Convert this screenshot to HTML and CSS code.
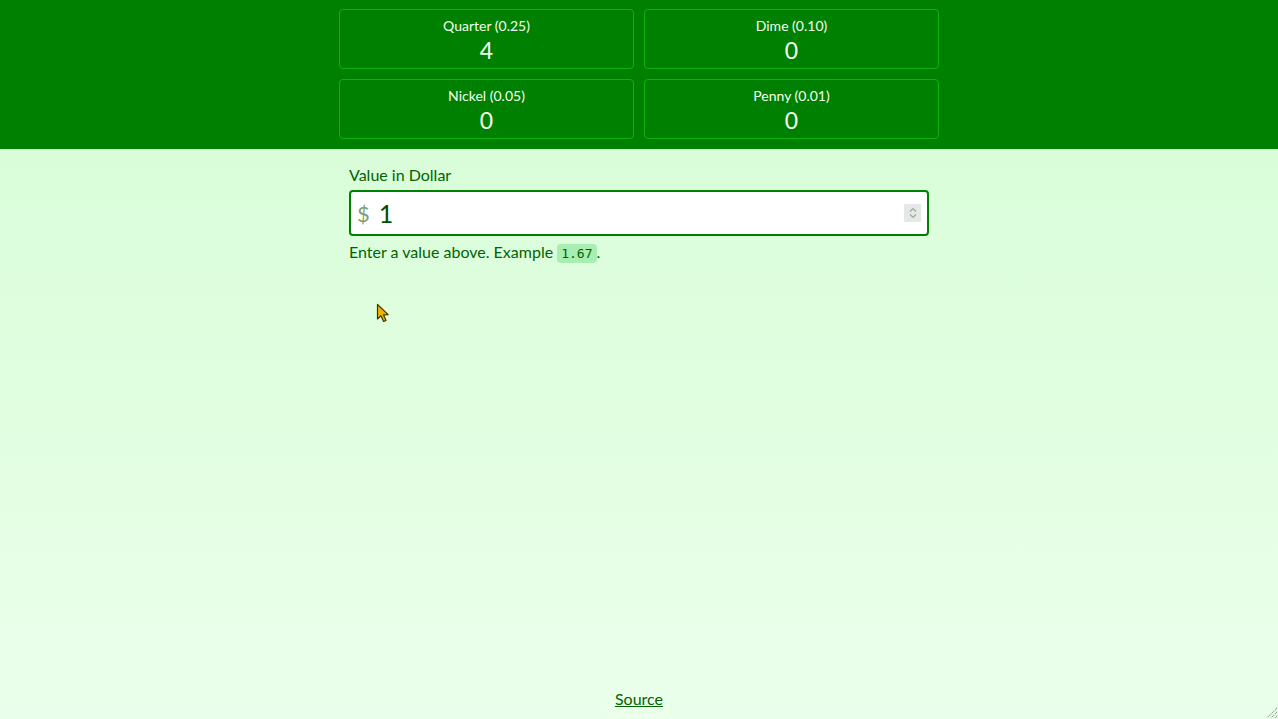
FILE: index.html
```html
<!DOCTYPE html>
<html lang="en">
<head>
<meta charset="utf-8">
<title>Coin Change</title>
<link rel="stylesheet" href="styles.css">
</head>
<body>
<div class="page">
  <header class="top">
    <div class="coins">
      <div class="coin"><div class="coin-label">Quarter (0.25)</div><div class="coin-count">4</div></div>
      <div class="coin"><div class="coin-label">Dime (0.10)</div><div class="coin-count">0</div></div>
      <div class="coin"><div class="coin-label">Nickel (0.05)</div><div class="coin-count">0</div></div>
      <div class="coin"><div class="coin-label">Penny (0.01)</div><div class="coin-count">0</div></div>
    </div>
  </header>
  <main class="main">
    <label class="field-label" for="amount">Value in Dollar</label>
    <div class="field">
      <span class="currency">$</span>
      <input class="amount" id="amount" type="text" value="1">
      <span class="spinner">
        <svg width="10" height="14" viewBox="0 0 10 14"><path d="M2 5.5 L5 2.5 L8 5.5" fill="none" stroke="#8fb08f" stroke-width="1.2"/><path d="M2 8.5 L5 11.5 L8 8.5" fill="none" stroke="#8fb08f" stroke-width="1.2"/></svg>
      </span>
    </div>
    <p class="help">Enter a value above. Example <code class="example">1.67</code>.</p>
  </main>
  <footer class="foot"><a class="source" href="#">Source</a></footer>
  <svg class="cursor" width="16" height="22" viewBox="0 0 16 22"><path d="M1.5 1.5 L1.5 16 L5 12.8 L7.6 18.5 L10 17.4 L7.5 11.8 L12.2 11.6 Z" fill="#f0b400" stroke="#3a3a00" stroke-width="1.2" stroke-linejoin="round"/></svg>
  <svg class="grip" width="14" height="14" viewBox="0 0 14 14"><path d="M13 3 L3 13 M13 7 L7 13 M13 11 L11 13" stroke="#7a9a7a" stroke-width="1.2" stroke-dasharray="1 1"/></svg>
</div>
</body>
</html>
```
FILE: styles.css
```css
* { box-sizing: border-box; }
html, body { margin: 0; padding: 0; }
body {
  font-family: "Segoe UI", Lato, "Noto Sans", sans-serif;
  color: #006400;
  background: linear-gradient(#d4fdd4, #ebffeb);
  min-height: 100vh;
}
.page {
  min-height: 100vh;
  display: flex;
  flex-direction: column;
  position: relative;
}
.top {
  background: #008000;
  padding: 9px 0 10px;
}
.coins {
  width: 600px;
  margin: 0 auto;
  display: grid;
  grid-template-columns: 1fr 1fr;
  gap: 10px;
}
.coin {
  height: 60px;
  border: 1px solid #10b010;
  border-radius: 4px;
  text-align: center;
  color: #f4fff0;
  padding-top: 6px;
}
.coin-label { font-size: 14px; line-height: 19px; }
.coin-count { font-size: 23px; line-height: 30px; }
.main {
  width: 600px;
  margin: 0 auto;
  padding: 15px 10px 0;
  flex: 1;
}
.field-label {
  display: block;
  font-size: 16px;
  line-height: 22px;
  margin-bottom: 4px;
}
.field {
  display: flex;
  align-items: center;
  height: 46px;
  background: #fff;
  border: 2px solid #008000;
  border-radius: 4px;
  padding: 0 6px 0 6px;
}
.currency {
  font-size: 22px;
  color: #7a9f7a;
  margin-right: 9px;
}
.amount {
  flex: 1;
  border: 0;
  outline: none;
  background: transparent;
  font-family: inherit;
  font-size: 25px;
  color: #004d00;
  padding: 0;
}
.spinner {
  width: 17px;
  height: 18px;
  background: #e6e8e8;
  display: flex;
  align-items: center;
  justify-content: center;
}
.help {
  margin: 5px 0 0;
  font-size: 16px;
  line-height: 22px;
}
.example {
  font-family: "DejaVu Sans Mono", monospace;
  font-size: 13px;
  background: #a8eeb0;
  border-radius: 4px;
  padding: 2px 4px;
}
.foot {
  text-align: center;
  padding-bottom: 11px;
}
.source {
  color: #006400;
  font-size: 16px;
  text-decoration: underline;
}
.cursor { position: absolute; left: 376px; top: 303px; }
.grip { position: absolute; right: 0; bottom: 0; }
```
